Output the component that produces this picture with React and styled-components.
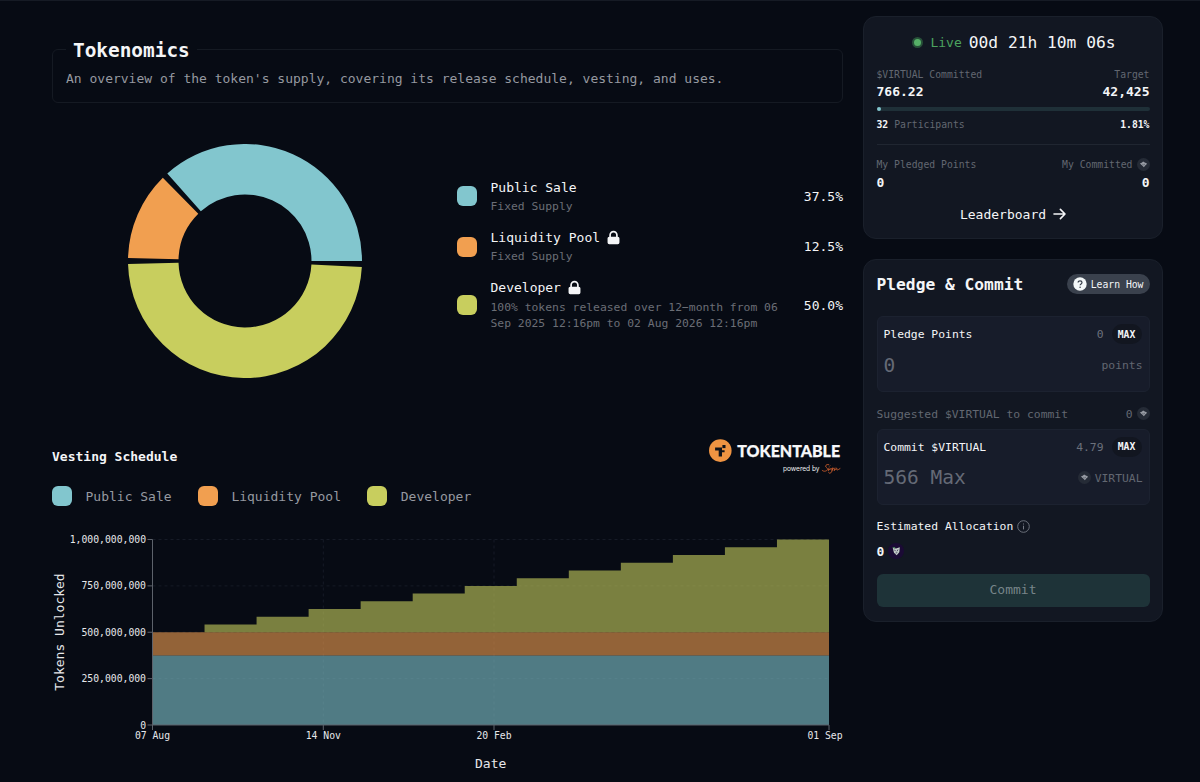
import React from "react";
import styled, { createGlobalStyle } from "styled-components";
import { HiLockClosed } from "react-icons/hi";

const GlobalStyle = createGlobalStyle`
  * {
    box-sizing: border-box;
  }
  body {
    margin: 0;
    background: #070b14;
    color: #f4f5f7;
    font-family: "DejaVu Sans Mono", "Liberation Mono", monospace;
    font-size: 13px;
    overflow: hidden;
  }
  p, h1, h2, h3 {
    margin: 0;
  }
`;

const COLORS = {
  sale: "#82c6ce",
  pool: "#f19f50",
  dev: "#c8ce5e"
};

const allocations = [
  { name: "Public Sale", note: "Fixed Supply", share: 37.5, color: COLORS.sale },
  {
    name: "Liquidity Pool",
    note: "Fixed Supply",
    share: 12.5,
    color: COLORS.pool,
    locked: true
  },
  {
    name: "Developer",
    note:
      "100% tokens released over 12−month from 06 Sep 2025 12:16pm to 02 Aug 2026 12:16pm",
    share: 50,
    color: COLORS.dev,
    locked: true
  }
];

const Page = styled.div`
  display: flex;
  align-items: flex-start;
  gap: 20px;
  height: 782px;
  padding: 0 37px 0 52px;
  border-top: 1px solid #161b25;
`;

const Main = styled.main`
  width: 791px;
  padding-top: 34px;
`;

const Intro = styled.fieldset`
  height: 68px;
  margin: 0;
  padding: 6px 13px 0;
  border: 1px solid #151a23;
  border-radius: 6px;
`;

const Legend = styled.legend`
  height: 28px;
  padding: 0 7px;
  font-size: 19.4px;
  font-weight: 700;
  line-height: 31px;
`;

const IntroText = styled.p`
  color: #9699a0;
  line-height: 20px;
`;

const Overview = styled.section`
  display: grid;
  grid-template-columns: 386px 1fr;
  column-gap: 19px;
  padding-top: 41px;
`;

const Donut = styled.svg`
  display: block;
  width: 234px;
  height: 234px;
  margin: 0 auto;
`;

const AllocationList = styled.div`
  display: flex;
  flex-direction: column;
  gap: 13.75px;
  padding-top: 34px;
`;

const AllocationRow = styled.div`
  display: flex;
  align-items: center;
`;

const Swatch = styled.span`
  flex: none;
  width: 20px;
  height: 20px;
  margin-right: 13.5px;
  border-radius: 6px;
  background: ${props => props.$color};
`;

const AllocationText = styled.div`
  width: 296px;
`;

const AllocationName = styled.h3`
  display: flex;
  align-items: center;
  gap: 5px;
  height: 20px;
  padding-bottom: 2px;
  font-size: 13px;
  font-weight: 400;

  svg {
    width: 17px;
    height: 17px;
  }
`;

const AllocationNote = styled.p`
  color: #6b6e76;
  font-size: 11.375px;
  line-height: 16.5px;
`;

const Share = styled.span`
  margin-left: auto;
`;

const VestingHeader = styled.div`
  display: flex;
  justify-content: space-between;
  height: 38px;
  margin-top: 61px;
`;

const VestingTitle = styled.h2`
  padding-top: 8px;
  font-size: 13px;
  font-weight: 700;
  line-height: 20px;
`;

const ChartLegend = styled.div`
  display: flex;
  gap: 26.3px;
  padding-top: 9px;
  color: #9699a0;
`;

const ChartLegendItem = styled.div`
  display: flex;
  align-items: center;
  height: 20px;
`;

const Chart = styled.svg`
  display: block;
  margin-top: 14px;
  font-family: inherit;
  font-size: 9.75px;
`;

const Sidebar = styled.aside`
  display: flex;
  flex-direction: column;
  gap: 20px;
  width: 301px;
  padding-top: 15px;
`;

const Card = styled.section`
  height: ${props => props.$height}px;
  padding: 0 12.5px;
  border: 1px solid #1a202b;
  border-radius: 13px;
  background: #121722;
`;

const Row = styled.div`
  display: flex;
  align-items: center;
  justify-content: space-between;
  height: ${props => props.$height}px;
  margin-top: ${props => props.$top || 0}px;
`;

const Timer = styled.div`
  display: flex;
  align-items: center;
  justify-content: center;
  height: 24px;
  margin-top: 13px;
  padding-left: 2px;
  font-size: 16.25px;
`;

const LiveDot = styled.span`
  width: 11px;
  height: 11px;
  margin-right: 7px;
  border: 2px solid #275039;
  border-radius: 50%;
  background: #56b067;
`;

const Live = styled.span`
  margin-right: 7px;
  color: #4ca35f;
  font-size: 13px;
`;

const Label = styled.span`
  display: flex;
  align-items: center;
  gap: ${props => props.$gap || 4}px;
  color: #626771;
  font-size: 9.75px;
`;

const Value = styled.span`
  font-size: 13px;
  font-weight: 700;
`;

const Small = styled.span`
  color: #f4f5f7;
  font-size: 9.75px;
  font-weight: 700;
`;

const Track = styled.div`
  height: 3.5px;
  margin-top: 6px;
  border-radius: 2px;
  background: #1f3038;
`;

const Fill = styled.div`
  height: 100%;
  border-radius: 2px;
  background: #82c6ce;
`;

const Divider = styled.hr`
  height: 1px;
  margin: 12px 0 10.5px;
  border: 0;
  background: #202631;
`;

const Leaderboard = styled.a`
  display: flex;
  align-items: center;
  justify-content: center;
  gap: 7px;
  height: 20px;
  margin-top: 13.5px;
`;

const CardTitle = styled.h2`
  font-size: 16.25px;
  font-weight: 700;
`;

const LearnHow = styled.button`
  display: flex;
  align-items: center;
  gap: 3.5px;
  height: 20px;
  padding: 0 6px;
  border: 0;
  border-radius: 10px;
  background: #3a414d;
  color: #f4f5f7;
  font: inherit;
  font-size: 9.75px;
`;

const Field = styled.div`
  height: 76px;
  margin-top: ${props => props.$top}px;
  padding: 7px 6px 0;
  border: 1px solid #1c2230;
  border-radius: 6px;
  background: #171c2a;
`;

const FieldLabel = styled.span`
  font-size: 11.375px;
`;

const Balance = styled.span`
  display: flex;
  align-items: center;
  gap: 8px;
  color: #6b707b;
  font-size: 11.375px;
`;

const MaxButton = styled.button`
  width: 30px;
  height: 20px;
  margin-right: 1px;
  padding: 0;
  border: 0;
  border-radius: 10px;
  background: #121620;
  color: #f4f5f7;
  font: inherit;
  font-size: 9.75px;
  font-weight: 700;
`;

const Amount = styled.span`
  color: #656a76;
  font-size: 19.5px;
`;

const Unit = styled.span`
  display: flex;
  align-items: center;
  gap: 4px;
  color: #626771;
  font-size: 11.375px;
`;

const Estimate = styled.div`
  display: flex;
  align-items: center;
  gap: 4px;
  height: 17px;
  margin-top: ${props => props.$top}px;
  font-size: 11.375px;
`;

const CommitButton = styled.button`
  width: 100%;
  height: 33.5px;
  margin-top: 14px;
  padding-bottom: 2px;
  border: 0;
  border-radius: 6px;
  background: #1e3338;
  color: #78858a;
  font: inherit;
`;

const VirtualIcon = () => (
  <svg width="13" height="13" viewBox="0 0 13 13">
    <circle cx="6.5" cy="6.5" r="6.5" fill="#252b36" />
    <path
      d="M3 5.3Q5 5.1 6.1 3.5Q7.6 4.3 10 5.5Q9.4 6.9 8.2 7.5L6.9 9.3L5.2 7.6Q3.8 6.8 3 5.3Z"
      fill="#979ba3"
    />
    <path d="M5.3 5.9l1.2 1.2l1.5-1.1" fill="none" stroke="#4a505b" strokeWidth="0.6" />
  </svg>
);

const HelpIcon = () => (
  <svg width="14" height="14" viewBox="0 0 14 14">
    <circle cx="7" cy="7" r="6.7" fill="#f4f8f9" />
    <path
      d="M5.1 5.5C5.1 3.2 9 3.2 9 5.5C9 7 7.1 6.8 7.1 8.3"
      fill="none"
      stroke="#343b47"
      strokeWidth="1.2"
    />
    <circle cx="7.1" cy="10.2" r="0.8" fill="#343b47" />
  </svg>
);

const InfoIcon = () => (
  <svg width="13" height="13" viewBox="0 0 13 13" fill="none" stroke="#757a84">
    <circle cx="6.5" cy="6.5" r="5.8" strokeWidth="0.9" />
    <path d="M6.5 5.7V9.4M6.5 3.5V4.5" strokeWidth="1" />
  </svg>
);

const TokenIcon = () => (
  <svg width="16" height="16" viewBox="0 0 16 16">
    <circle cx="8" cy="8" r="8" fill="#1b0a35" />
    <path d="M4.7 4.7L8 5.4L11.8 4.2L11.3 9.2L8.7 12.3L6 9.8Z" fill="#c5cfca" />
    <path d="M4.3 4.2L7.4 4L6.3 5.7Z" fill="#48885a" />
    <path d="M6.4 6.7L7.6 8.2M10 6.5L9 8.3M7.6 10L9.3 9.7" stroke="#43385b" strokeWidth="0.9" />
  </svg>
);

const ArrowIcon = () => (
  <svg
    width="13"
    height="12"
    viewBox="0 0 13 12"
    fill="none"
    stroke="#f4f5f7"
    strokeWidth="1.6"
    strokeLinecap="round"
    strokeLinejoin="round"
  >
    <path d="M1 6H12M7.4 1.4L12 6L7.4 10.6" />
  </svg>
);

const TokenTableLogo = () => (
  <svg width="134" height="38" viewBox="0 0 134 38">
    <circle cx="11.3" cy="11.6" r="11.3" fill="#ef9442" />
    <path d="M6.1 8.6H13V11.2H15.6V13.2H13V17.6H9.7V11.6H6.1Z" fill="#10131a" />
    <rect x="13.4" y="6" width="3.1" height="3.1" fill="#10131a" />
    <text
      x="28.2"
      y="18"
      fill="#f7f8fa"
      stroke="#f7f8fa"
      strokeWidth="0.25"
      fontFamily="Lato, sans-serif"
      fontWeight="900"
      fontSize="16.4"
      textLength="103"
      lengthAdjust="spacingAndGlyphs"
    >
      TOKENTABLE
    </text>
    <text
      x="74"
      y="31.7"
      fill="#f0f1f3"
      fontFamily="Inter, sans-serif"
      fontSize="7.3"
      textLength="36.5"
      lengthAdjust="spacingAndGlyphs"
    >
      powered by
    </text>
    <g fill="none" stroke="#cf5f2d" strokeWidth="0.85" strokeLinecap="round">
      <path d="M119.8 25.7C117.2 24.5 115.4 27.5 117.7 28.8C120.5 30.6 115.8 34 113.2 31.4" />
      <path d="M120 29L119.2 31.6L121.6 29.7" />
      <path d="M124 29C121.6 28.8 121.2 31.9 123.4 31L124.2 29L122.5 33.2Q120.7 35.5 119.5 33.5" />
      <path d="M126 29L125.2 31.7Q128.4 27.7 127.8 30Q127.1 32.2 131 29.6" />
      <path d="M120.6 27.2L120.9 26.9" />
    </g>
  </svg>
);

// sectors run counterclockwise from three o'clock with a small gap between them
const PAD_ANGLE = 3;

const sectorPath = (start, end, outer = 117, inner = 66.5) => {
  const point = (radius, angle) => {
    const rad = (angle * Math.PI) / 180;
    return `${117 + radius * Math.cos(rad)} ${117 - radius * Math.sin(rad)}`;
  };
  const large = end - start > 180 ? 1 : 0;
  return `M${point(outer, start)} A${outer} ${outer} 0 ${large} 0 ${point(outer, end)}
    L${point(inner, end)} A${inner} ${inner} 0 ${large} 1 ${point(inner, start)} Z`;
};

const SupplyDonut = () => {
  const total = 360 - PAD_ANGLE * allocations.length;
  let start = 0;

  return (
    <Donut viewBox="0 0 234 234">
      {allocations.map(item => {
        const end = start + (total * item.share) / 100;
        const d = sectorPath(start, end);
        start = end + PAD_ANGLE;
        return <path key={item.name} d={d} fill={item.color} />;
      })}
    </Donut>
  );
};

const LEFT = 100.5;
const RIGHT = 777;
const TOP = 19.5;
const BOTTOM = 205;
const STEPS = 13;

const yFor = millions => BOTTOM - ((BOTTOM - TOP) * millions) / 1000;

const yTicks = [0, 250, 500, 750, 1000];
const xTicks = [
  { x: LEFT, label: "07 Aug" },
  { x: 271.3, label: "14 Nov" },
  { x: 442, label: "20 Feb" },
  { x: RIGHT, label: "01 Sep", labelX: 773 }
];

const developerPath = () => {
  const stepWidth = (RIGHT - LEFT) / STEPS;
  let d = `M${LEFT} ${yFor(500)}`;
  for (let i = 0; i < STEPS; i++) {
    d += `V${yFor(500 + (i * 500) / 12)}H${LEFT + stepWidth * (i + 1)}`;
  }
  return `${d}V${yFor(500)}Z`;
};

const VestingChart = () => (
  <Chart width="791" height="262" viewBox="0 0 791 262">
    <g stroke="#161b26" strokeDasharray="3 3">
      {yTicks.slice(1).map(tick => (
        <line key={tick} x1={LEFT} x2={RIGHT} y1={yFor(tick)} y2={yFor(tick)} />
      ))}
      {xTicks.slice(1, 3).map(tick => (
        <line key={tick.x} x1={tick.x} x2={tick.x} y1={TOP} y2={BOTTOM} />
      ))}
    </g>
    <g fillOpacity="0.6">
      <rect
        x={LEFT}
        y={yFor(375)}
        width={RIGHT - LEFT}
        height={BOTTOM - yFor(375)}
        fill={COLORS.sale}
      />
      <rect
        x={LEFT}
        y={yFor(500)}
        width={RIGHT - LEFT}
        height={yFor(375) - yFor(500)}
        fill={COLORS.pool}
      />
      <path d={developerPath()} fill={COLORS.dev} />
    </g>
    <g stroke="#5d626b">
      <line x1={LEFT} x2={LEFT} y1={TOP} y2={BOTTOM} />
      <line x1={LEFT} x2={RIGHT} y1={BOTTOM} y2={BOTTOM} />
      {yTicks.map(tick => (
        <line key={tick} x1={LEFT - 5} x2={LEFT} y1={yFor(tick)} y2={yFor(tick)} />
      ))}
      {xTicks.map(tick => (
        <line key={tick.x} x1={tick.x} x2={tick.x} y1={BOTTOM} y2={BOTTOM + 5} />
      ))}
    </g>
    <g fill="#e6e7ea">
      {yTicks.map(tick => (
        <text key={tick} x="94" y={yFor(tick) + 3.6} textAnchor="end">
          {(tick * 1000000).toLocaleString("en-US")}
        </text>
      ))}
      {xTicks.map(tick => (
        <text key={tick.x} x={tick.labelX || tick.x} y="218.7" textAnchor="middle">
          {tick.label}
        </text>
      ))}
      <text x="438.7" y="248" fontSize="13" textAnchor="middle">
        Date
      </text>
      <text fontSize="13" textAnchor="middle" transform="translate(11.5 112) rotate(-90)">
        Tokens Unlocked
      </text>
    </g>
  </Chart>
);

const SaleCard = () => (
  <Card $height={223}>
    <Timer>
      <LiveDot />
      <Live>Live</Live>
      <span>00d 21h 10m 06s</span>
    </Timer>
    <Row $height={14} $top={13}>
      <Label>$VIRTUAL Committed</Label>
      <Label>Target</Label>
    </Row>
    <Row $height={20}>
      <Value>766.22</Value>
      <Value>42,425</Value>
    </Row>
    <Track>
      <Fill style={{ width: "1.81%" }} />
    </Track>
    <Row $height={16} $top={5.5}>
      <Label $gap={6}>
        <Small>32</Small> Participants
      </Label>
      <Small>1.81%</Small>
    </Row>
    <Divider />
    <Row $height={18}>
      <Label>My Pledged Points</Label>
      <Label>
        My Committed <VirtualIcon />
      </Label>
    </Row>
    <Row $height={17}>
      <Value>0</Value>
      <Value>0</Value>
    </Row>
    <Leaderboard>
      Leaderboard <ArrowIcon />
    </Leaderboard>
  </Card>
);

const PledgeCard = () => (
  <Card $height={363}>
    <Row $height={24} $top={12}>
      <CardTitle>Pledge &amp; Commit</CardTitle>
      <LearnHow>
        <HelpIcon />
        Learn How
      </LearnHow>
    </Row>
    <Field $top={20}>
      <Row $height={20}>
        <FieldLabel>Pledge Points</FieldLabel>
        <Balance>
          0 <MaxButton>MAX</MaxButton>
        </Balance>
      </Row>
      <Row $height={24} $top={9}>
        <Amount>0</Amount>
        <Unit>points</Unit>
      </Row>
    </Field>
    <Row $height={18} $top={12.5}>
      <Unit>Suggested $VIRTUAL to commit</Unit>
      <Unit>
        0 <VirtualIcon />
      </Unit>
    </Row>
    <Field $top={6}>
      <Row $height={20}>
        <FieldLabel>Commit $VIRTUAL</FieldLabel>
        <Balance>
          4.79 <MaxButton>MAX</MaxButton>
        </Balance>
      </Row>
      <Row $height={24} $top={9}>
        <Amount>566 Max</Amount>
        <Unit>
          <VirtualIcon /> VIRTUAL
        </Unit>
      </Row>
    </Field>
    <Estimate $top={13}>
      Estimated Allocation <InfoIcon />
    </Estimate>
    <Estimate $top={8}>
      <Value>0</Value> <TokenIcon />
    </Estimate>
    <CommitButton>Commit</CommitButton>
  </Card>
);

const App = () => (
  <>
    <GlobalStyle />
    <Page>
      <Main>
        <Intro>
          <Legend>Tokenomics</Legend>
          <IntroText>
            An overview of the token's supply, covering its release schedule, vesting, and
            uses.
          </IntroText>
        </Intro>
        <Overview>
          <SupplyDonut />
          <AllocationList>
            {allocations.map(item => (
              <AllocationRow key={item.name}>
                <Swatch $color={item.color} />
                <AllocationText>
                  <AllocationName>
                    {item.name}
                    {item.locked && <HiLockClosed />}
                  </AllocationName>
                  <AllocationNote>{item.note}</AllocationNote>
                </AllocationText>
                <Share>{item.share.toFixed(1)}%</Share>
              </AllocationRow>
            ))}
          </AllocationList>
        </Overview>
        <VestingHeader>
          <VestingTitle>Vesting Schedule</VestingTitle>
          <TokenTableLogo />
        </VestingHeader>
        <ChartLegend>
          {allocations.map(item => (
            <ChartLegendItem key={item.name}>
              <Swatch $color={item.color} />
              {item.name}
            </ChartLegendItem>
          ))}
        </ChartLegend>
        <VestingChart />
      </Main>
      <Sidebar>
        <SaleCard />
        <PledgeCard />
      </Sidebar>
    </Page>
  </>
);

export default App;
